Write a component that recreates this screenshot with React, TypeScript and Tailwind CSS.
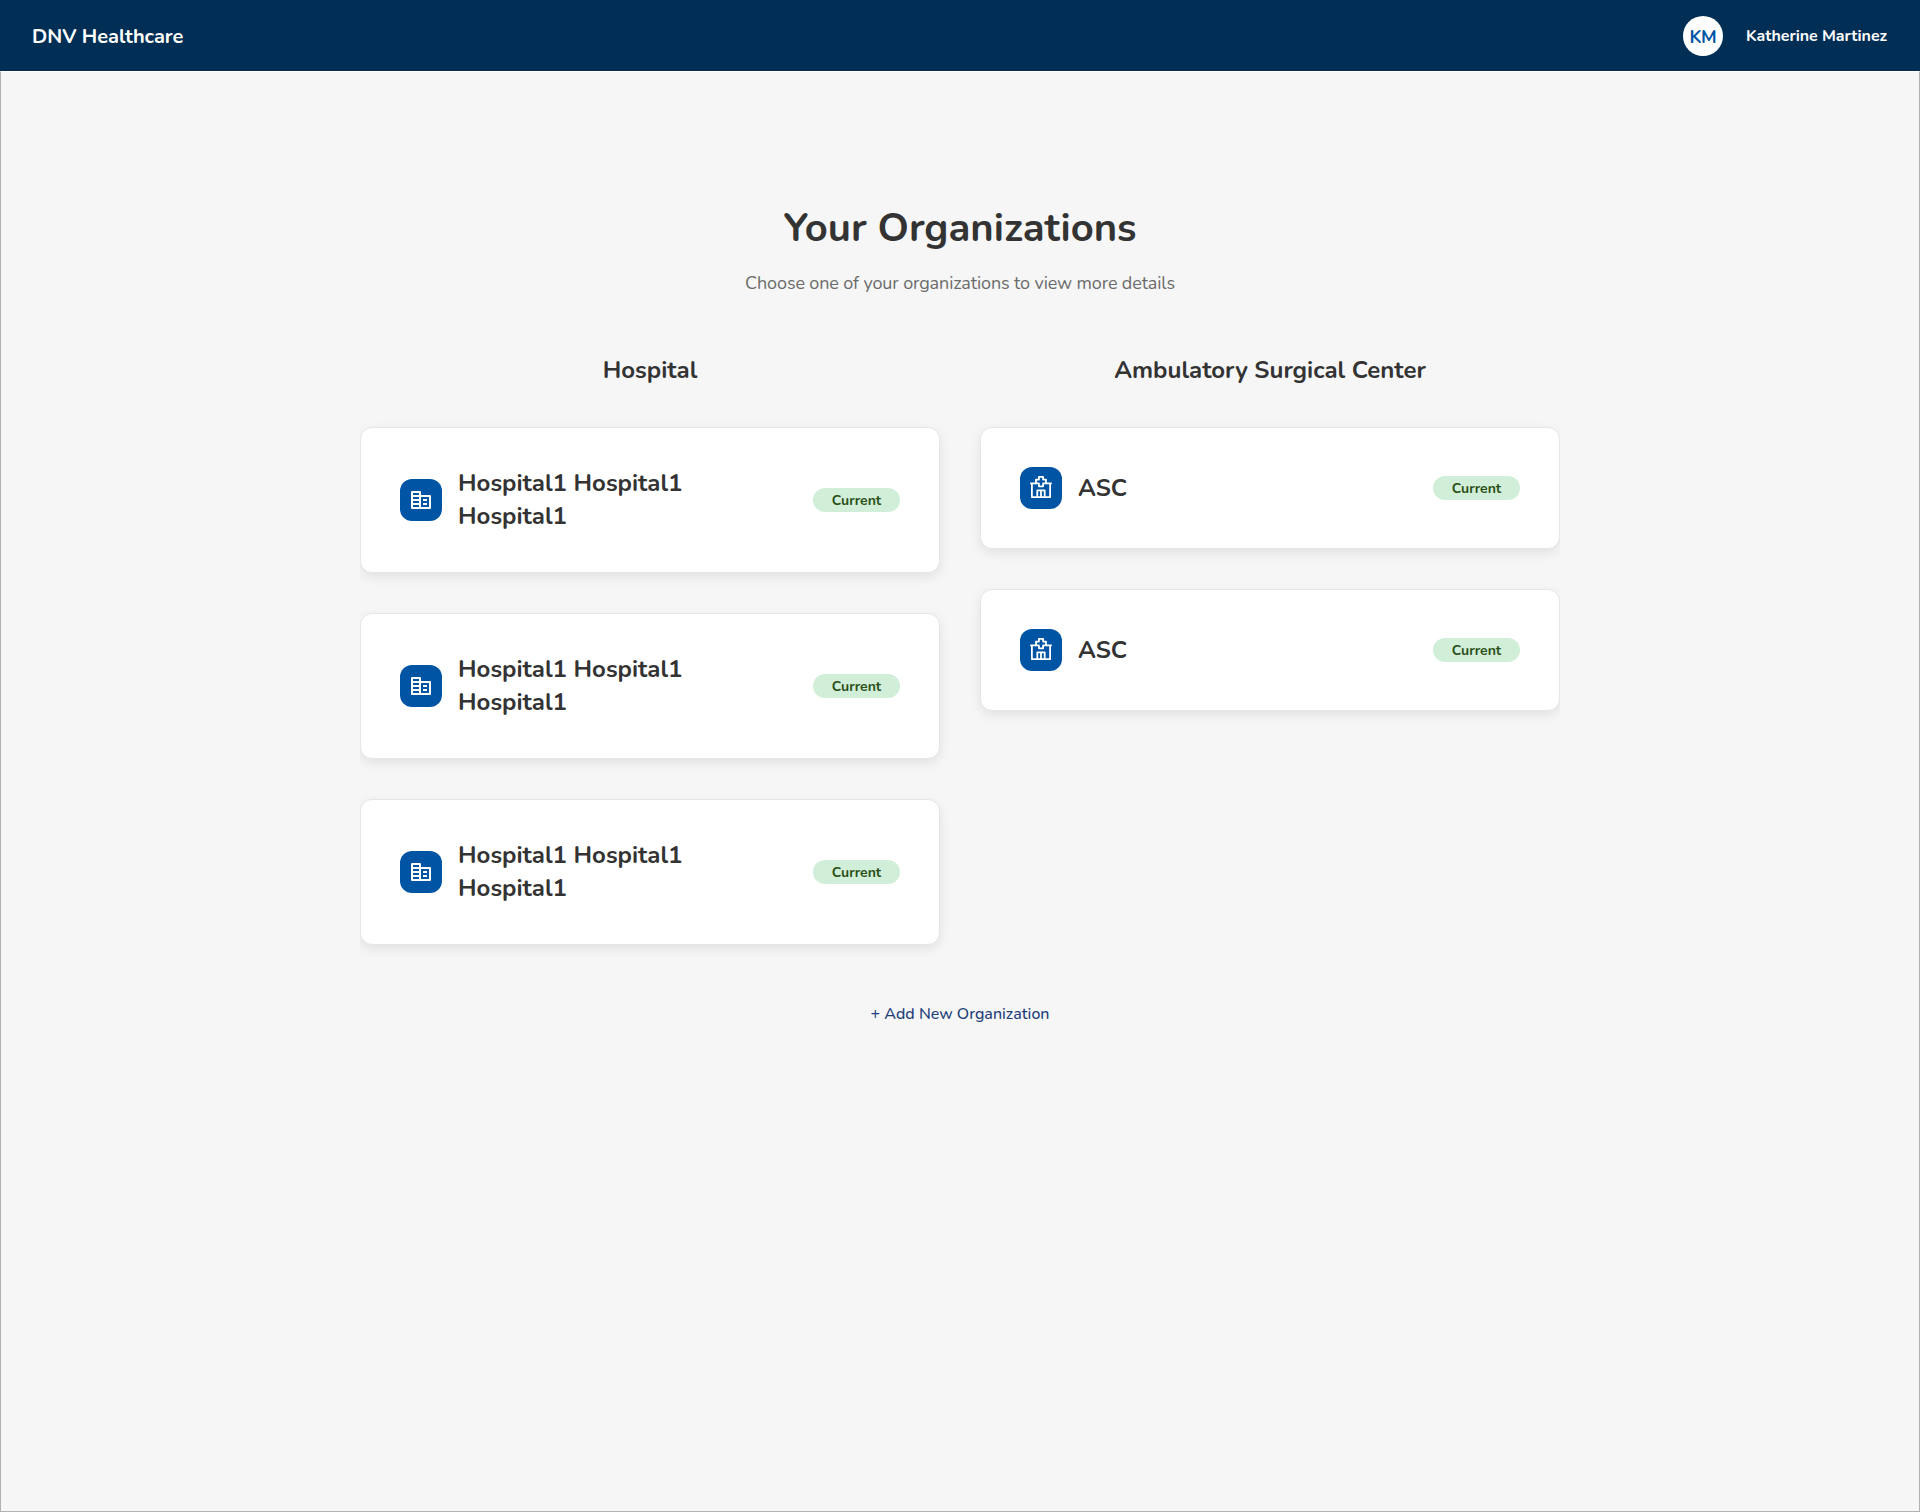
type Kind = "hospital" | "asc";

const hospitals = ["Hospital1 Hospital1 Hospital1", "Hospital1 Hospital1 Hospital1", "Hospital1 Hospital1 Hospital1"];
const centers = ["ASC", "ASC"];

function OfficeIcon() {
  return (
    <svg width="24" height="24" viewBox="0 0 24 24" fill="white" fillRule="evenodd">
      <path d="M12 7V4A1 1 0 0 0 11 3h-8A1 1 0 0 0 2 4v16A1 1 0 0 0 3 21h18a1 1 0 0 0 1-1v-12A1 1 0 0 0 21 7H12zm-2 12H4v-2h6v2zm0-4H4v-2h6v2zm0-4H4V9h6v2zm0-4H4V5h6v2zm10 12h-8V9h8v10zm-2-8h-4v2h4v-2zm0 4h-4v2h4v-2z" />
    </svg>
  );
}

function ClinicIcon() {
  return (
    <svg width="24" height="24" viewBox="0 0 24 24" fill="none" stroke="white" strokeWidth="1.8" strokeLinejoin="round">
      <path d="M9.900 .9h4.200v2.700h2.900v3.800h-2.900v2.900H9.900V7.400H7V3.600h2.900z" />
      <path d="M1.200 7.300H7M17 7.300h5.800M2.900 7.300v13.900h18.200v-13.900" />
      <path d="M8.300 21.200v-6.900h7.400v6.900M12 14.300v6.900" />
    </svg>
  );
}

function OrgCard({ name, kind }: { name: string; kind: Kind }) {
  return (
    <div className="flex items-center rounded-xl border border-[#e6e6e6] bg-white p-[39px] shadow-[0_4px_12px_rgba(0,0,0,0.085)]">
      <div className="flex size-[42px] shrink-0 items-center justify-center rounded-xl bg-[#0054a4]">
        {kind === "hospital" ? <OfficeIcon /> : <ClinicIcon />}
      </div>
      <div className="ml-4 w-[260px] text-[24px] leading-[33px] font-bold text-[#333333]">{name}</div>
      <div className="ml-auto flex h-6 w-[87px] items-center justify-center rounded-full bg-[#d1eed9] pt-px text-[14px] leading-[15px] font-bold text-[#2a5016]">
        Current
      </div>
    </div>
  );
}

function Column({ title, names, kind }: { title: string; names: string[]; kind: Kind }) {
  return (
    <section className="flex flex-1 flex-col">
      <h2 className="mb-10 text-center text-[24px] leading-[33px] font-bold text-[#333333]">{title}</h2>
      <div className="flex flex-col gap-10">
        {names.map((name, i) => (
          <OrgCard key={i} name={name} kind={kind} />
        ))}
      </div>
    </section>
  );
}

export default function App() {
  return (
    <div className="flex h-[1512px] w-[1920px] flex-col bg-[#f6f6f6] font-[Nunito,Lato,sans-serif]">
      <header className="flex h-[71px] shrink-0 items-center justify-between bg-[#002e54] pr-[33px] pl-8 text-white">
        <div className="pt-[3px] text-[20px] leading-7 font-bold tracking-[-0.03px]">DNV Healthcare</div>
        <div className="flex items-center">
          <div className="flex size-10 items-center justify-center rounded-full bg-white pt-0.5 text-[18px] leading-none font-bold tracking-[-0.3px] text-[#0054a4]">
            KM
          </div>
          <div className="ml-[23px] text-[16px] leading-6 font-bold tracking-[-0.04px]">Katherine Martinez</div>
        </div>
      </header>
      <main className="flex flex-1 flex-col items-center border-x border-t border-b border-x-[#b3b3b3] border-t-white border-b-[#b3b3b3]">
        <h1 className="mt-[129px] text-[40px] leading-[55px] font-bold text-[#333333]">Your Organizations</h1>
        <p className="mt-[15px] text-[18px] leading-[25px] tracking-[-0.13px] text-[#6b6b6b]">
          Choose one of your organizations to view more details
        </p>
        <div className="mt-[58px] flex w-[1200px] gap-10 overflow-hidden pb-10">
          <Column title="Hospital" names={hospitals} kind="hospital" />
          <Column title="Ambulatory Surgical Center" names={centers} kind="asc" />
        </div>
        <button className="mt-[17px] text-[16px] leading-6 font-medium text-[#1f3f7a]">+ Add New Organization</button>
      </main>
    </div>
  );
}
